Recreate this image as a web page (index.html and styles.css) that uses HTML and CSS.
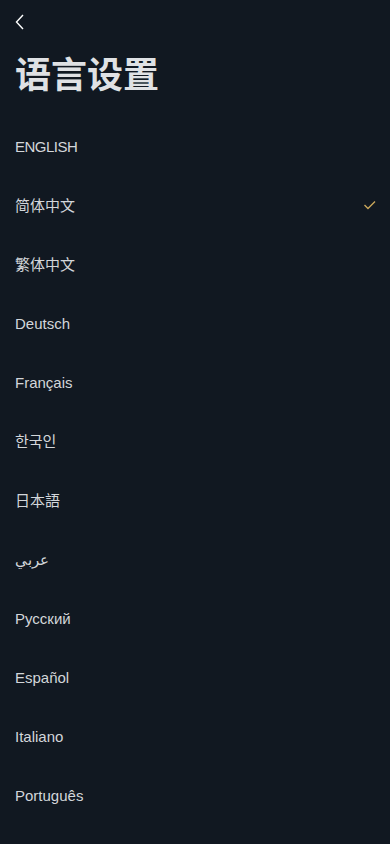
FILE: index.html
```html
<!DOCTYPE html>
<html lang="zh">
<head>
<meta charset="utf-8">
<meta name="viewport" content="width=device-width, initial-scale=1">
<link rel="stylesheet" href="styles.css">
</head>
<body>
<div class="page">
  <header class="topbar">
    <svg class="back" width="12" height="18" viewBox="0 0 12 18"><path d="M9 2 L2.5 9 L9 16" fill="none" stroke="#ffffff" stroke-width="1.4"/></svg>
  </header>
  <h1 class="title">语言设置</h1>
  <ul class="langs">
    <li class="lang caps">ENGLISH</li>
    <li class="lang cjk selected">简体中文<svg class="check" width="14" height="10" viewBox="0 0 14 10"><path d="M1.5 5 L5 8.5 L12 1.5" fill="none" stroke="#c9a65b" stroke-width="1.4"/></svg></li>
    <li class="lang cjk">繁体中文</li>
    <li class="lang">Deutsch</li>
    <li class="lang">Français</li>
    <li class="lang cjk">한국인</li>
    <li class="lang cjk">日本語</li>
    <li class="lang">عربي</li>
    <li class="lang">Русский</li>
    <li class="lang">Español</li>
    <li class="lang">Italiano</li>
    <li class="lang">Português</li>
  </ul>
</div>
</body>
</html>
```
FILE: styles.css
```css
html, body {
  margin: 0;
  padding: 0;
  background: #111821;
}
body {
  font-family: "Liberation Sans", Arial, "Noto Sans CJK SC", sans-serif;
  color: #d3d6da;
}
.page {
  width: 390px;
  min-height: 844px;
}
.topbar {
  height: 44px;
  display: flex;
  align-items: center;
  padding-left: 14px;
}
.back {
  display: block;
  margin-top: -1px;
}
.title {
  margin: 0;
  padding: 5px 0 0 15px;
  height: 63px;
  font-size: 36px;
  line-height: 46px;
  font-weight: 700;
  font-family: "Noto Sans CJK SC", sans-serif;
  color: #dfe1e4;
  box-sizing: border-box;
}
.langs {
  list-style: none;
  margin: 10px 0 0;
  padding: 0 15px;
}
.lang {
  height: 59px;
  display: flex;
  align-items: center;
  justify-content: space-between;
  font-size: 15px;
  font-family: "Liberation Sans", Arial, "Noto Sans CJK SC", sans-serif;
}
.caps {
  letter-spacing: -0.5px;
}
.cjk {
  font-size: 15px;
  font-family: "Noto Sans CJK SC", sans-serif;
  line-height: 20px;
  padding-bottom: 2px;
  box-sizing: border-box;
}
.check {
  display: block;
  margin-right: -2px;
}
```
